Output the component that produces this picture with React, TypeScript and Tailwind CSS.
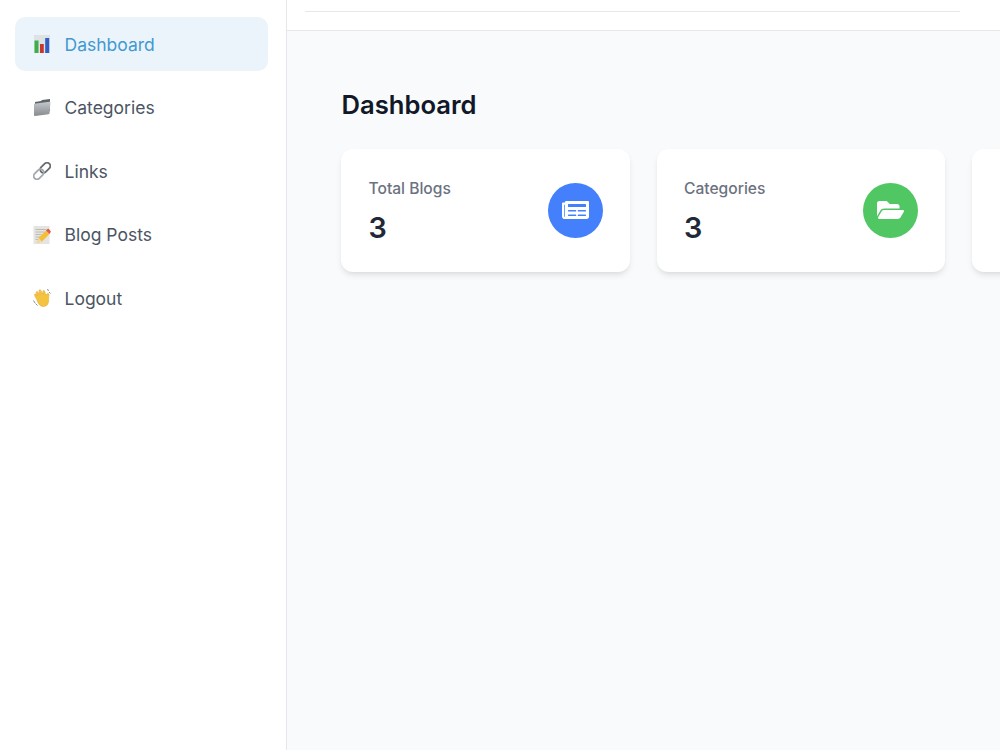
import { FaFolderOpen, FaNewspaper } from 'react-icons/fa';

function ChartEmoji() {
  return (
    <svg viewBox="0 0 18 18" className="h-[18px] w-[18px]">
      <rect x="1" y="0" width="16" height="18" fill="#dfe2e4" />
      <rect x="1.5" y="5.5" width="4" height="12.5" fill="#3fae4a" />
      <rect x="7" y="9" width="3.8" height="9" fill="#c8372f" />
      <rect x="12.2" y="3" width="4" height="15" fill="#2f5fc4" />
    </svg>
  );
}

function FolderEmoji() {
  return (
    <svg viewBox="0 0 18 18" className="h-[18px] w-[18px]">
      <defs>
        <linearGradient id="folder" x1="0" y1="0" x2="0" y2="1">
          <stop offset="0" stopColor="#c4c8cb" />
          <stop offset="1" stopColor="#868b90" />
        </linearGradient>
      </defs>
      <path d="M2 3 L8 2 L9 1 L17 0 L17 12 L2 14 Z" fill="#5f646a" />
      <path d="M1 4.8 L16.5 2.8 Q17.6 2.7 17.4 3.8 L16.6 14 Q16.5 15 15.5 15.2 L2 17 Q1 17.1 1 16 Z" fill="url(#folder)" />
    </svg>
  );
}

function LinkEmoji() {
  return (
    <svg viewBox="0 0 18 18" className="h-[18px] w-[18px]" fill="none">
      <rect x="9" y="0" width="6.5" height="11.5" rx="3.25" transform="rotate(45 12.25 5.75)" stroke="#666b70" strokeWidth="1.8" />
      <rect x="2.5" y="6.5" width="6.5" height="11.5" rx="3.25" transform="rotate(45 5.75 12.25)" stroke="#a4a9ae" strokeWidth="1.8" />
    </svg>
  );
}

function MemoEmoji() {
  return (
    <svg viewBox="0 0 18 18" className="h-[18px] w-[18px]">
      <rect x="0.5" y="0" width="16" height="18" fill="#e6e4e0" />
      <path d="M2.5 3.5h11M2.5 6h9M2.5 8.5h6M2.5 11h5M2.5 13.5h3" stroke="#b0b0b0" strokeWidth="0.8" />
      <path d="M4 17 L5.5 12 L13 4.5 L16.5 8 L9 15.5 Z" fill="#f2c038" />
      <path d="M13 4.5 L14.5 3 Q15.2 2.6 15.8 3 L17.6 5 Q18 5.6 17.6 6.2 L16.5 8 Z" fill="#e2574f" />
      <path d="M4 17 L5.5 12 L9 15.5 Z" fill="#f0d9b0" />
    </svg>
  );
}

function WaveEmoji() {
  return (
    <svg viewBox="0 0 18 18" className="h-[18px] w-[18px]">
      <path d="M0.5 11.5 L2 14 M2.5 14.5 L4.5 16.5" stroke="#8a9098" strokeWidth="1" />
      <path d="M14 0.5 L16 1.5 M16 3 L17.5 4.5" stroke="#8a9098" strokeWidth="1" />
      <path
        d="M2.8 8.8 C1.6 7 1.2 5.6 1.8 5 C2.5 4.4 3.6 5.4 4.6 6.8 L3.2 3.8 C2.8 2.6 4 1.9 4.8 2.8 L6.8 5.6 L6 1.8 C5.8 0.6 7.1 0.2 7.8 1.2 L9.8 5.4 L9.8 2.4 C9.8 1.2 11.2 1 11.6 2.1 L13 6.2 C13.6 5 14.4 4.2 15.4 4.6 C16.5 5 15.9 6.6 15.7 8 C15.4 10.6 16.2 13 14.6 15.4 C12.8 17.9 8.8 18.2 6.6 16 C5 14.6 4 11 2.8 8.8 Z"
        fill="#f4c33f"
        stroke="#dc9a25"
        strokeWidth="0.4"
      />
    </svg>
  );
}

const navItems = [
  { label: 'Dashboard', icon: <ChartEmoji />, active: true },
  { label: 'Categories', icon: <FolderEmoji /> },
  { label: 'Links', icon: <LinkEmoji /> },
  { label: 'Blog Posts', icon: <MemoEmoji /> },
  { label: 'Logout', icon: <WaveEmoji /> },
];

function StatCard({ label, value, icon, color }: { label: string; value: string; icon: React.ReactNode; color: string }) {
  return (
    <div className="flex h-[122.5px] w-[288.5px] shrink-0 items-center justify-between rounded-xl bg-white pl-[27.5px] pr-[27px] shadow-[0_4px_6px_-1px_rgba(0,0,0,0.1),0_2px_4px_-2px_rgba(0,0,0,0.05)]">
      <div className="pt-[2px]">
        <div className="text-[15.6px] leading-[24px] font-medium text-[#6b7280]">{label}</div>
        <div className="mt-[9px] text-[28.8px] leading-[35px] font-semibold text-[#1f2937]">{value}</div>
      </div>
      <div className={`flex h-[55px] w-[55px] items-center justify-center rounded-full text-white ${color}`}>
        {icon}
      </div>
    </div>
  );
}

export default function App() {
  return (
    <div className="flex h-[750px] w-[1000px] overflow-hidden bg-white font-['Inter',sans-serif]">
      {/* Sidebar */}
      <aside className="h-full w-[287px] shrink-0 border-r border-[#e5e7eb] bg-white pl-[15px] pr-[18px] pt-[17px]">
        <nav className="flex flex-col gap-[9.5px]">
          {navItems.map((item) => (
            <div
              key={item.label}
              className={`flex h-[54px] items-center gap-[13.5px] rounded-[10px] pl-[18px] text-[17.5px] ${
                item.active ? 'bg-[#ebf4fb] text-[#4299d0]' : 'text-[#4b5563]'
              }`}
            >
              {item.icon}
              <span className="pt-[2px]">{item.label}</span>
            </div>
          ))}
        </nav>
      </aside>

      {/* Main */}
      <div className="flex min-w-0 flex-1 flex-col bg-[#f9fafb]">
        <header className="h-[31px] shrink-0 border-b border-[#e5e7eb] bg-white pl-[18px]">
          <div className="h-[12px] w-[655px] border-b border-[#e5e7eb]" />
        </header>
        <main className="pl-[54px] pt-[56px]">
          <h1 className="pl-[0.5px] text-[25.6px] leading-[36px] font-semibold text-[#111827]">Dashboard</h1>
          <div className="mt-[26px] flex gap-[27px]">
            <StatCard label="Total Blogs" value="3" color="bg-[#4480fb]" icon={<FaNewspaper className="h-[24px] w-[27px]" />} />
            <StatCard label="Categories" value="3" color="bg-[#50c763]" icon={<FaFolderOpen className="h-[24px] w-[27px]" />} />
            <div className="h-[122.5px] w-[288.5px] shrink-0 rounded-xl bg-white shadow-[0_4px_6px_-1px_rgba(0,0,0,0.1),0_2px_4px_-2px_rgba(0,0,0,0.05)]" />
          </div>
        </main>
      </div>
    </div>
  );
}
